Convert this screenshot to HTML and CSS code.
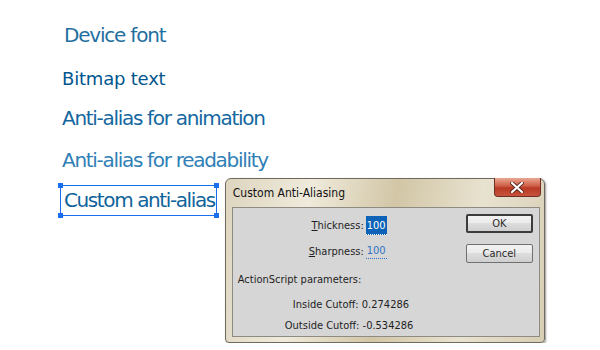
FILE: index.html
```html
<!DOCTYPE html>
<html lang="en">
<head>
  <meta charset="UTF-8">
  <title>Anti-alias options</title>
  <link rel="stylesheet" href="styles.css">
</head>
<body>
  <div class="stage">
    <p class="sample device">Device font</p>
    <p class="sample bitmap">Bitmap text</p>
    <p class="sample anim">Anti-alias for animation</p>
    <p class="sample read">Anti-alias for readability</p>

    <div class="last-row">
      <div class="selected">
        <span class="sample custom">Custom anti-alias</span>
        <i class="handle tl"></i><i class="handle tr"></i>
        <i class="handle bl"></i><i class="handle br"></i>
      </div>

      <div class="dialog">
        <div class="titlebar">
          <span class="title">Custom Anti-Aliasing</span>
          <span class="close">
            <svg width="14" height="11" viewBox="0 0 14 11">
              <path d="M2 1 L12 10 M12 1 L2 10" stroke="#5a2a20" stroke-width="4" stroke-linecap="round"/>
              <path d="M2 1 L12 10 M12 1 L2 10" stroke="#fff" stroke-width="2.2" stroke-linecap="round"/>
            </svg>
          </span>
        </div>
        <div class="panel">
          <div class="fields">
            <div class="field"><span class="lbl"><u>T</u>hickness:</span><span class="val active">100</span></div>
            <div class="field"><span class="lbl"><u>S</u>harpness:</span><span class="val">100</span></div>
            <div class="as-head">ActionScript parameters:</div>
            <div class="cut cut-in">Inside Cutoff: 0.274286</div>
            <div class="cut cut-out">Outside Cutoff: -0.534286</div>
          </div>
          <div class="buttons">
            <button class="btn default">OK</button>
            <button class="btn">Cancel</button>
          </div>
        </div>
      </div>
    </div>
  </div>
</body>
</html>
```

FILE: styles.css
```css
body { margin: 0; background: #fff; font-family: "DejaVu Sans", Tahoma, sans-serif; }
.stage { padding: 23px 0 0 62px; }

.sample { margin: 0; font-size: 20px; line-height: 24px; letter-spacing: -1.3px; }
.device { color: #1f6fa0; padding-left: 2px; height: 44px; letter-spacing: -1.2px; }
.bitmap { color: #00568e; font-size: 18px; height: 39px; letter-spacing: -0.2px; }
.anim { color: #14679f; height: 42px; }
.read { color: #2f80b6; height: 30px; }
.custom { color: #10639a; letter-spacing: -1.4px; }

.last-row { display: flex; align-items: flex-start; }
.selected { position: relative; border: 1px solid #1a6ff0; padding: 2px 1px 2px 3px; margin: 7px 0 0 -2px; line-height: 23px; }
.handle { position: absolute; width: 5px; height: 5px; background: #1a6ff0; }
.tl { left: -3px; top: -3px; }
.tr { right: -3px; top: -3px; }
.bl { left: -3px; bottom: -3px; }
.br { right: -3px; bottom: -3px; }

.dialog { margin-left: 8px; width: 318px; height: 163px; border: 1px solid #6f6a5c; border-radius: 6px 6px 4px 4px;
  background: linear-gradient(100deg, #ddd5bf 0%, #efeadb 25%, #d2c6a6 50%, #e8e2d0 75%, #d8ceb5 100%);
  box-shadow: 1px 1px 2px rgba(0,0,0,0.4); font-family: "DejaVu Sans Condensed", "DejaVu Sans", sans-serif; font-size: 11px; color: #1e1e1e; }
.titlebar { height: 28px; display: flex; justify-content: space-between; align-items: flex-start; }
.title { padding: 7px 0 0 7px; font-size: 12px; color: #111; }
.close { width: 45px; height: 18px; margin: -1px 3px 0 0; border: 1px solid #6e3026; border-top: none; border-radius: 0 0 4px 4px;
  background: linear-gradient(#e9a792, #cf5c44 45%, #b93a24 55%, #c8533c); display: flex; align-items: center; justify-content: center; }

.panel { margin: 0 4px 0 6px; height: 128px; background: #d6d6d6; border: 1px solid #8e8b82; display: flex; }
.fields { flex: 1; padding-top: 7px; }
.field { display: flex; align-items: center; height: 20px; margin-bottom: 6px; }
.lbl { width: 131px; text-align: right; padding-right: 2px; }
.val { color: #2e74c4; border-bottom: 1px dotted #2e74c4; padding: 0 1px; line-height: 15px; }
.val.active { background: #0d63b8; color: #fff; border-bottom-color: #fff; padding: 2px 1px 1px; }
.as-head { padding: 6px 0 0 5px; height: 16px; }
.cut { height: 25px; line-height: 25px; }
.cut-in { padding: 3px 0 0 60px; height: 21px; }
.cut-out { padding-left: 52px; }

.buttons { width: 73px; display: flex; flex-direction: column; gap: 11px; padding-top: 6px; }
.btn { width: 67px; height: 19px; padding: 0; font: inherit; color: #2a2a2a; border: 1px solid #707070; border-radius: 2px;
  background: linear-gradient(#f2f2f2, #ebebeb 45%, #dddddd 50%, #cfcfcf); }
.btn.default { border: 2px solid #3c3c3c; height: 19px; }
```
